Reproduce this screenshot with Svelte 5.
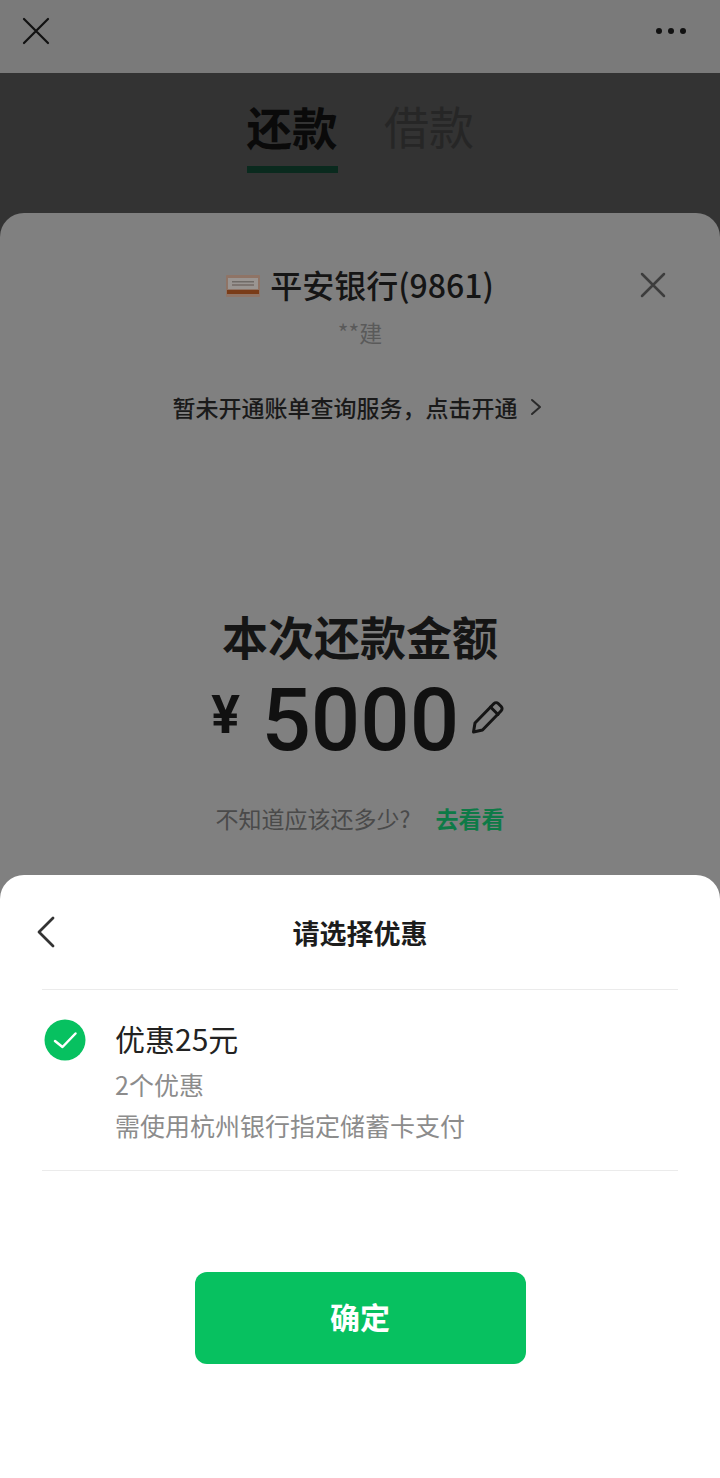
<script>
  const tabs = ["还款", "借款"];
  let active = $state(0);
</script>

<div class="page">
  <header class="nav">
    <svg class="nav-close" width="28" height="28" viewBox="0 0 28 28"><path d="M2 2l24 24M26 2L2 26" /></svg>
    <div class="dots"><i></i><i></i><i></i></div>
  </header>

  <div class="tabs">
    {#each tabs as tab, i}
      <button class="tab" class:on={active === i} onclick={() => (active = i)}>{tab}</button>
    {/each}
  </div>

  <main class="card">
    <section class="bill">
      <svg class="card-close" width="26" height="26" viewBox="0 0 26 26"><path d="M2 2l22 22M24 2L2 24" /></svg>
      <div class="bank">
        <svg class="bank-logo" width="34" height="22" viewBox="0 0 34 22">
          <rect width="34" height="22" rx="1" fill="#8f7466" />
          <rect x="2" y="3" width="30" height="11" fill="#9a9592" />
          <rect x="6" y="6" width="22" height="1.500" fill="#6f6a66" />
          <rect x="6" y="9" width="22" height="2" fill="#7d7470" />
          <rect x="1" y="15" width="32" height="4" fill="#7a3c18" />
        </svg>
        <span>平安银行(9861)</span>
      </div>
      <div class="holder">**建</div>
      <div class="notice">
        暂未开通账单查询服务，点击开通
        <svg width="12" height="18" viewBox="0 0 12 18"><path d="M2 2l8 7-8 7" /></svg>
      </div>
      <h2>本次还款金额</h2>
      <div class="amount">
        <span class="yen">¥</span>
        <span class="num">5000</span>
        <svg width="36" height="36" viewBox="0 0 36 36">
          <path d="M3.500 33l1.500-9L24 4.500a3 3 0 0 1 4.200 0l3 3a3 3 0 0 1 0 4.200L12.500 31z" />
          <path d="M20.500 8l7.500 7.500" />
        </svg>
      </div>
      <div class="hint">
        <span>不知道应该还多少?</span>
        <a href="#look">去看看</a>
      </div>
    </section>

    <section class="sheet">
      <div class="sheet-head">
        <svg width="20" height="32" viewBox="0 0 20 32"><path d="M17 2L3 16l14 14" /></svg>
        <h3>请选择优惠</h3>
      </div>
      <div class="offer">
        <svg class="check" width="42" height="42" viewBox="0 0 42 42">
          <circle cx="21" cy="21" r="20.500" fill="#07c160" />
          <path d="M11 22l7.500 6L31.500 14.500" />
        </svg>
        <div class="offer-text">
          <div class="offer-title">优惠25元</div>
          <div class="offer-sub">2个优惠</div>
          <div class="offer-sub">需使用杭州银行指定储蓄卡支付</div>
        </div>
      </div>
      <button class="confirm">确定</button>
    </section>
  </main>
</div>

<style>
  :global(body) {
    margin: 0;
    background: #333;
  }
  .page {
    width: 720px;
    height: 1478px;
    display: flex;
    flex-direction: column;
    overflow: hidden;
    background: #333;
    font-family: "Noto Sans CJK SC", "Liberation Sans", sans-serif;
    color: #111;
  }
  svg path {
    fill: none;
    stroke-linecap: round;
    stroke-linejoin: round;
  }
  .nav {
    height: 73px;
    flex: none;
    background: #7a7a7a;
    display: flex;
    align-items: center;
    justify-content: space-between;
    padding: 0 34px 12px 22px;
    box-sizing: border-box;
  }
  .nav-close path {
    stroke: #111;
    stroke-width: 2.2;
  }
  .dots {
    display: flex;
    gap: 6px;
  }
  .dots i {
    width: 6px;
    height: 6px;
    border-radius: 50%;
    background: #111;
  }
  .tabs {
    height: 140px;
    flex: none;
    display: flex;
    justify-content: center;
    gap: 46px;
    padding-left: 1px;
    box-sizing: border-box;
  }
  .tab {
    all: unset;
    height: 93px;
    width: 91px;
    text-align: center;
    font-size: 45px;
    line-height: 106px;
    color: #262626;
    box-sizing: content-box;
    white-space: nowrap;
  }
  .tab.on {
    color: #0a0a0a;
    font-size: 45.500px;
    font-weight: 700;
    border-bottom: 7px solid #0a2a1e;
  }
  .card {
    flex: 1;
    display: flex;
    flex-direction: column;
    background: #808080;
    border-radius: 24px 24px 0 0;
    min-height: 0;
  }
  .bill {
    height: 662px;
    flex: none;
    position: relative;
    display: flex;
    flex-direction: column;
    align-items: center;
    box-sizing: border-box;
    padding-top: 49px;
  }
  .card-close {
    position: absolute;
    top: 59px;
    right: 54px;
  }
  .card-close path {
    stroke: #3d3d3d;
    stroke-width: 2.5;
  }
  .bank {
    display: flex;
    align-items: center;
    gap: 10px;
    font-size: 32px;
    font-weight: 500;
    line-height: 44px;
    color: #151515;
  }
  .bank-logo {
    margin-top: 4px;
  }
  .holder {
    font-size: 23px;
    line-height: 34px;
    color: #5a5a5a;
    margin-top: 9px;
  }
  .notice {
    display: flex;
    align-items: center;
    gap: 12px;
    font-size: 23px;
    line-height: 34px;
    font-weight: 500;
    color: #1a1a1a;
    margin-top: 41px;
    margin-right: 6px;
  }
  .notice path {
    stroke: #2a2a2a;
    stroke-width: 2;
  }
  h2 {
    margin: 181px 0 0;
    font-size: 46px;
    line-height: 60px;
    font-weight: 700;
    color: #151515;
  }
  .amount {
    display: flex;
    align-items: center;
    height: 90px;
    margin-top: 10px;
    margin-right: 3px;
    color: #111;
  }
  .yen {
    font-family: "Inter", sans-serif;
    font-size: 52px;
    font-weight: 700;
    margin-right: 21px;
    margin-top: -12px;
  }
  .num {
    font-family: "Roboto", sans-serif;
    font-size: 87px;
    font-weight: 500;
    margin-right: 11px;
  }
  .amount path {
    stroke: #151515;
    stroke-width: 3;
  }
  .amount svg {
    margin-top: -6px;
  }
  .hint {
    display: flex;
    align-items: center;
    gap: 25px;
    font-size: 23px;
    line-height: 34px;
    margin-top: 36px;
    color: #4a4a4a;
  }
  .hint a {
    color: #0e7a47;
    font-weight: 700;
    text-decoration: none;
  }
  .sheet {
    flex: 1;
    background: #fff;
    border-radius: 24px 24px 0 0;
    padding: 0 42px;
    display: flex;
    flex-direction: column;
  }
  .sheet-head {
    height: 115px;
    flex: none;
    display: flex;
    align-items: center;
    justify-content: center;
    position: relative;
    border-bottom: 1px solid #ebebeb;
    box-sizing: border-box;
  }
  .sheet-head svg {
    position: absolute;
    left: -6px;
    top: 41px;
  }
  .sheet-head path {
    stroke: #333;
    stroke-width: 2.8;
  }
  h3 {
    margin: 0;
    font-size: 27px;
    font-weight: 700;
    color: #1c1c1c;
    margin-top: 1px;
  }
  .offer {
    height: 181px;
    flex: none;
    display: flex;
    gap: 29px;
    padding: 29px 0 0 2px;
    box-sizing: border-box;
    border-bottom: 1px solid #ebebeb;
  }
  .check path {
    stroke: #fff;
    stroke-width: 2.5;
  }
  .offer-title {
    font-size: 30px;
    line-height: 40px;
    color: #222;
    margin-top: -1px;
  }
  .offer-sub {
    font-size: 25px;
    line-height: 36px;
    color: #8c8c8c;
    margin-top: 5px;
  }
  .offer-title + .offer-sub {
    margin-top: 8px;
  }
  .confirm {
    all: unset;
    width: 331px;
    height: 88px;
    padding-bottom: 4px;
    margin: 101px auto 0;
    border-radius: 12px;
    background: #07c160;
    color: #fff;
    text-align: center;
    font-size: 30px;
    font-weight: 700;
    line-height: 88px;
    flex: none;
  }
</style>
